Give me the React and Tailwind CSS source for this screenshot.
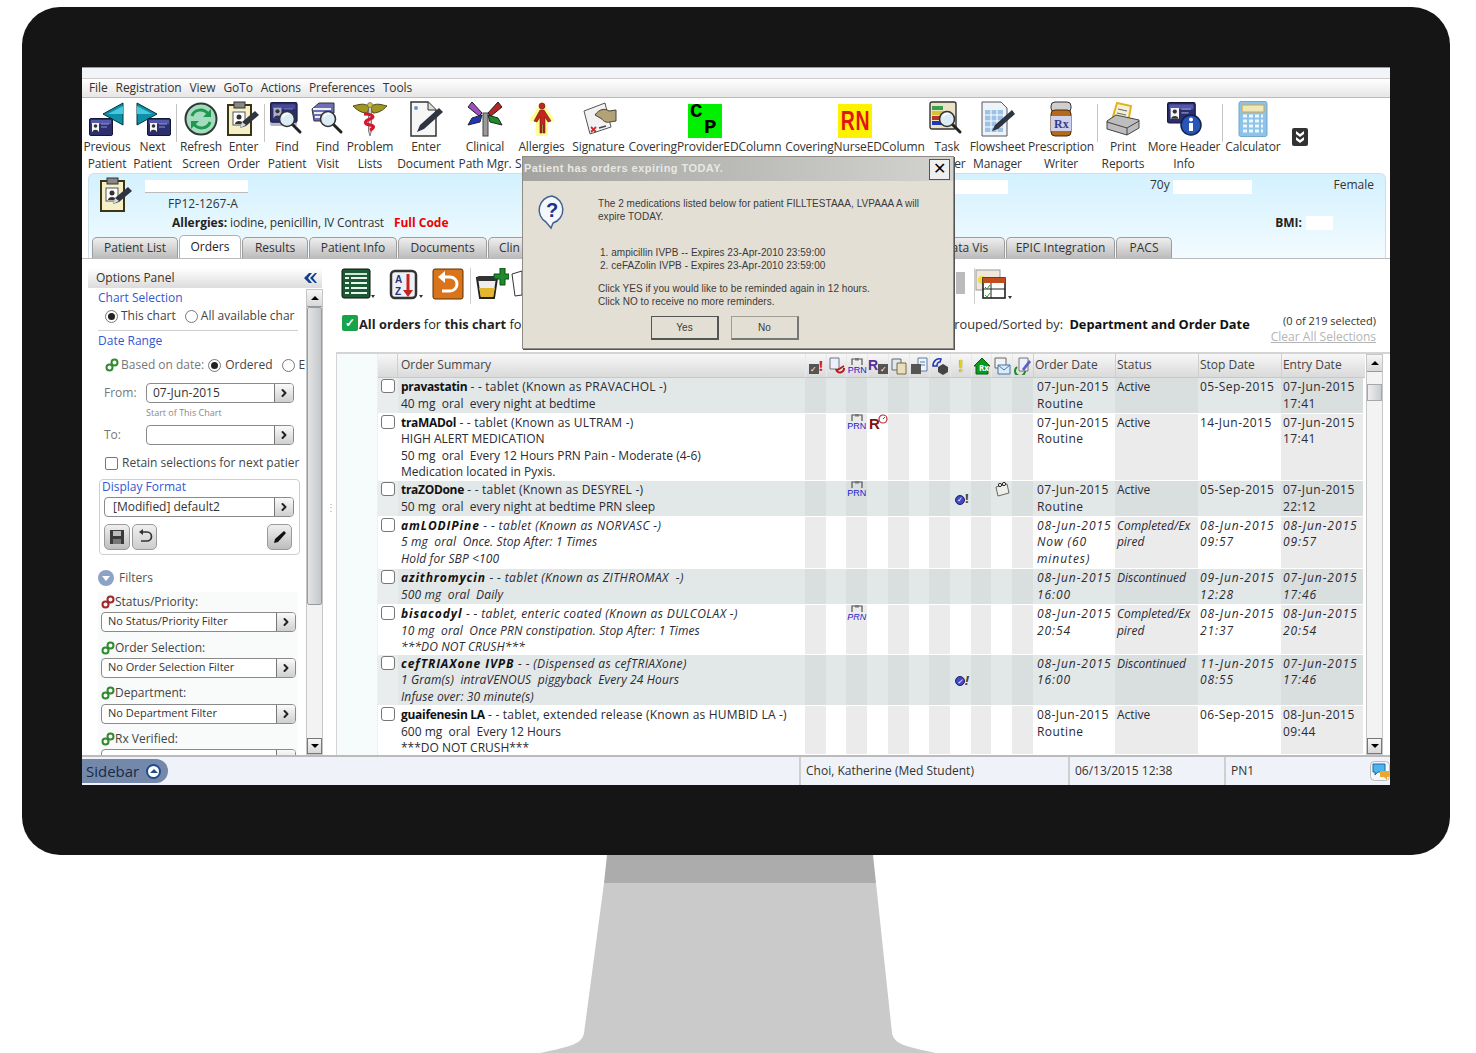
import { ChevronRight } from 'lucide-react';

const cardIcon = (
  <g>
    <rect x="0.5" y="0.5" width="23" height="17" rx="1.5" fill="#2c2f6e" stroke="#15173a" />
    <rect x="2" y="2" width="20" height="4" fill="#5358a8" />
    <rect x="3" y="5" width="7" height="9" fill="#f4f4f4" />
    <circle cx="6.5" cy="8" r="1.8" fill="#333" />
    <path d="M3.5 14c0-3 6-3 6 0z" fill="#333" />
    <path d="M12 6h8M12 9h6" stroke="#8f93d6" strokeWidth="1" />
  </g>
);

const glass = (
  <g>
    <path d="M23 23l8 8" stroke="#222" strokeWidth="3" strokeLinecap="round" />
    <circle cx="18" cy="18" r="7.5" fill="#dcecf7" stroke="#333" strokeWidth="1.6" />
    <path d="M14 16c1-3 4-4 6-3" stroke="#fff" strokeWidth="1.5" fill="none" />
  </g>
);

const pencil = (
  <g>
    <path d="M14 27l2-6 13-11 4 4-13 11z" fill="#2e3440" />
    <path d="M14 27l2-6 4 3z" fill="#d8d8d8" />
  </g>
);

function Ico({ children, box = '0 0 36 36' }) {
  return <svg viewBox={box} className="w-[36px] h-[36px]">{children}</svg>;
}

const icons = {
  prev: (
    <Ico>
      <path d="M34 2v22L14 13z" fill="#0e8fa8" stroke="#06323d" />
      <path d="M34 5v8L19 13z" fill="#48c8df" />
      <g transform="translate(0 17)">{cardIcon}</g>
    </Ico>
  ),
  next: (
    <Ico>
      <path d="M2 2v22l20-11z" fill="#0e8fa8" stroke="#06323d" />
      <path d="M2 5v8l15 0z" fill="#48c8df" />
      <g transform="translate(12 17)">{cardIcon}</g>
    </Ico>
  ),
  refresh: (
    <Ico>
      <circle cx="18" cy="18" r="15.5" fill="#a5dcc0" stroke="#2d3a35" strokeWidth="2" />
      <path d="M9 15c2-7 12-8 16-2" fill="none" stroke="#1f9950" strokeWidth="3" />
      <path d="M28 8v8h-8z" fill="#1f9950" />
      <path d="M27 21c-2 7-12 8-16 2" fill="none" stroke="#1f9950" strokeWidth="3" />
      <path d="M8 28v-8h8z" fill="#1f9950" />
    </Ico>
  ),
  order: (
    <Ico>
      <rect x="2" y="4" width="23" height="30" fill="#f5f0c8" stroke="#3a3614" strokeWidth="2" />
      <rect x="8" y="1" width="11" height="6" fill="#888" stroke="#333" />
      <rect x="7" y="11" width="12" height="13" fill="#fff" stroke="#555" />
      <circle cx="13" cy="16" r="2.5" fill="#333" />
      <path d="M9 23c0-4 8-4 8 0z" fill="#333" />
      {pencil}
    </Ico>
  ),
  findPatient: (
    <Ico>
      <g transform="translate(1 1) scale(1.15)">{cardIcon}</g>
      <rect x="1" y="1" width="27" height="24" rx="2" fill="#2c2f6e" opacity="0.35" />
      {glass}
    </Ico>
  ),
  findVisit: (
    <Ico>
      <path d="M2 8l7-6h15v10L12 20H4z" fill="#6a6fb8" stroke="#333" />
      <path d="M3 8h18M4 12h16M5 16h12" stroke="#eee" strokeWidth="2" />
      {glass}
    </Ico>
  ),
  problem: (
    <Ico>
      <path d="M18 6C12 1 6 4 1 5c4 4 8 7 14 7zM18 6c6-5 12-2 17-1-4 4-8 7-14 7z" fill="#a09622" stroke="#4e4a10" />
      <path d="M16.5 4h3v26l-1.5 5-1.5-5z" fill="#cfcfcf" stroke="#555" strokeWidth="0.7" />
      <path d="M12 13c8 0 12 3 6 5-6 2-6 5 0 6 6 1 3 4 0 5" fill="none" stroke="#d8152a" strokeWidth="3.2" />
      <circle cx="18" cy="4" r="2.5" fill="#d6c23a" stroke="#555" strokeWidth="0.6" />
    </Ico>
  ),
  document: (
    <Ico>
      <path d="M3 1h17l8 8v26H3z" fill="#f6f6f6" stroke="#333" strokeWidth="1.5" />
      <path d="M20 1v8h8" fill="#ddd" stroke="#333" />
      <circle cx="8" cy="7" r="2" fill="#6a8fd8" />
      <path d="M9 31l3-7 19-17 4 4-19 17z" fill="#2e3440" />
    </Ico>
  ),
  clinical: (
    <Ico>
      <rect x="16" y="12" width="5" height="23" fill="#9a9a9a" stroke="#444" />
      <path d="M15 12L5 1 1 6l11 9z" fill="#9b4fc0" stroke="#222" />
      <path d="M21 12L31 1l4 5-11 9z" fill="#b5252a" stroke="#222" />
      <path d="M15 14L5 17 1 24l12-3z" fill="#2136b8" stroke="#222" />
      <path d="M21 14l10 3 4 7-12-3z" fill="#1d8a2c" stroke="#222" />
    </Ico>
  ),
  allergies: (
    <Ico>
      <path d="M18 0l13 20-7 1v14H12V21l-7-1z" fill="#ffff6a" opacity="0.75" />
      <circle cx="18" cy="5" r="3" fill="#c3261d" stroke="#5a1d10" strokeWidth="0.6" />
      <path d="M16 9h4l7 11-3 1-3-5v16h-2v-9h-1v9h-2V16l-3 5-3-1z" fill="#c3261d" stroke="#5a1d10" strokeWidth="0.6" />
    </Ico>
  ),
  signature: (
    <Ico>
      <path d="M3 10L24 2l6 24-21 7z" fill="#f2f2f2" stroke="#555" />
      <path d="M10 26l5 5M15 26l-5 5" stroke="#d12a2a" strokeWidth="1.8" />
      <path d="M18 27l7-2" stroke="#444" strokeWidth="1.5" />
      <path d="M14 14c4-6 10-7 14-4l7-1v11l-6 1c-4 1-7-1-8-3z" fill="#b1a277" stroke="#4a442f" />
    </Ico>
  ),
  task: (
    <Ico>
      <rect x="1" y="1" width="26" height="27" rx="2" fill="#e9e2c4" stroke="#333" strokeWidth="1.4" />
      <rect x="3" y="5" width="11" height="4" fill="#3aa14a" />
      <rect x="3" y="10" width="11" height="4" fill="#d6c23a" />
      <rect x="3" y="15" width="11" height="4" fill="#b5352a" />
      <rect x="3" y="20" width="11" height="4" fill="#2136b8" />
      {glass}
    </Ico>
  ),
  flowsheet: (
    <Ico>
      <path d="M2 1h19l6 6v28H2z" fill="#eef3f8" stroke="#556" />
      <path d="M5 9h18v22H5z" fill="#9cc3e6" />
      <path d="M11 9v22M17 9v22M5 14h18M5 20h18M5 26h18" stroke="#fff" />
      <path d="M12 30l3-6 17-15 3 4-17 15z" fill="#2e3440" />
    </Ico>
  ),
  rx: (
    <Ico>
      <rect x="8" y="1" width="20" height="10" rx="4" fill="#cfcfcf" stroke="#333" />
      <rect x="8" y="9" width="20" height="26" rx="4" fill="#b46a1c" stroke="#4a2a08" />
      <rect x="8" y="15" width="20" height="15" fill="#cfd0ea" />
      <text x="11" y="27" fontSize="12" fontWeight="700" fontFamily="Liberation Serif, serif" fill="#343a8a">Rx</text>
    </Ico>
  ),
  print: (
    <Ico>
      <path d="M12 2l14 3-3 17-16-3z" fill="#f4f0d8" stroke="#e2b41c" strokeWidth="2" />
      <path d="M13 8l9 2M12 12l9 2" stroke="#666" />
      <path d="M2 20l9-6 23 5v8l-12 7L2 28z" fill="#bdbdbd" stroke="#444" />
      <path d="M2 21l20 6 12-7M22 27v7" stroke="#444" fill="none" />
    </Ico>
  ),
  header: (
    <Ico>
      <g transform="translate(1 1) scale(1.2)">{cardIcon}</g>
      <circle cx="25" cy="24" r="10" fill="#2955b8" stroke="#10204a" strokeWidth="1.5" />
      <circle cx="25" cy="18.5" r="2" fill="#fff" />
      <path d="M23 22h4v8h-4z" fill="#fff" />
    </Ico>
  ),
  calculator: (
    <Ico>
      <rect x="4" y="0.5" width="28" height="35" rx="2" fill="#8cc3ea" stroke="#74a7cc" />
      <rect x="7" y="4" width="22" height="7" fill="#eee8b8" stroke="#d7a33a" />
      <path d="M8 15h4M14 15h4M20 15h4M26 15h2M8 20h4M14 20h4M20 20h4M26 20h2M8 25h4M14 25h4M20 25h4M26 25h2M8 30h4M14 30h4M20 30h4M26 30h2" stroke="#eef7fd" strokeWidth="3" />
    </Ico>
  ),
};

const toolbar = [
  { w: 'w-[46px]', icon: icons.prev, lines: ['Previous', 'Patient'] },
  { w: 'w-[45px]', icon: icons.next, lines: ['Next', 'Patient'] },
  { sep: true },
  { w: 'w-[46px]', icon: icons.refresh, lines: ['Refresh', 'Screen'] },
  { w: 'w-[39px]', icon: icons.order, lines: ['Enter', 'Order'] },
  { sep: true },
  { w: 'w-[42px]', icon: icons.findPatient, lines: ['Find', 'Patient'] },
  { w: 'w-[39px]', icon: icons.findVisit, lines: ['Find', 'Visit'] },
  { w: 'w-[46px]', icon: icons.problem, lines: ['Problem', 'Lists'] },
  { w: 'w-[66px]', icon: icons.document, lines: ['Enter', 'Document'] },
  { w: 'w-[52px]', icon: icons.clinical, lines: ['Clinical', 'Path Mgr.'] },
  { w: 'w-[61px]', icon: icons.allergies, lines: ['Allergies', 'Summary'] },
  { w: 'w-[53px]', icon: icons.signature, lines: ['Signature', ''] },
  {
    w: 'w-[160px]',
    lines: ['CoveringProviderEDColumn', ''],
    icon: (
      <div className="w-[34px] h-[34px] mt-[3px] bg-[#00f000] text-black font-['Liberation_Mono',monospace] font-bold text-[21px] leading-[16px] pl-[2px] overflow-hidden">
        <div>C</div>
        <div className="pl-[14px]">P</div>
      </div>
    ),
  },
  {
    w: 'w-[140px]',
    lines: ['CoveringNurseEDColumn', ''],
    icon: (
      <div className="w-[34px] h-[34px] mt-[3px] bg-[#fff200] text-[#e01515] font-['Liberation_Sans',sans-serif] font-bold text-[27px] leading-[34px] flex justify-center overflow-hidden">
        <span className="scale-x-[0.72] tracking-[1px]">RN</span>
      </div>
    ),
  },
  { w: 'w-[44px]', icon: icons.task, lines: ['Task', 'Viewer'] },
  { w: 'w-[57px]', icon: icons.flowsheet, lines: ['Flowsheet', 'Manager'] },
  { w: 'w-[70px]', icon: icons.rx, lines: ['Prescription', 'Writer'] },
  { sep: true },
  { w: 'w-[48px]', icon: icons.print, lines: ['Print', 'Reports'] },
  { w: 'w-[74px]', icon: icons.header, lines: ['More Header', 'Info'] },
  { sep: true },
  { w: 'w-[58px]', icon: icons.calculator, lines: ['Calculator', ''] },
];

function ToolSep() {
  return <div className="w-px h-[38px] mt-[6px] mx-[1px] bg-[#c4c4c4] shrink-0" />;
}

function ToolItem({ item }) {
  return (
    <div className={`${item.w} shrink-0 flex flex-col items-center`}>
      <div className="h-[42px] flex items-center justify-center">{item.icon}</div>
      <div className="-mt-[2px] leading-[17px] whitespace-nowrap text-center tracking-[-0.12px]">
        <div>{item.lines[0]}</div>
        <div>{item.lines[1]}</div>
      </div>
    </div>
  );
}

function Tab({ w, active, children }) {
  return (
    <div
      className={
        active
          ? `${w} h-[23px] -mt-[2px] border border-b-0 border-[#b0b0b0] rounded-t-[5px] bg-white flex items-center justify-center text-[#222]`
          : `${w} h-[21px] border border-b-0 border-[#9c9c9c] rounded-t-[5px] bg-linear-to-b from-[#efefef] to-[#bcbcbc] flex items-center justify-center text-[#333]`
      }
    >
      {children}
    </div>
  );
}

function LinkIcon({ red }) {
  const c = red ? '#a3262a' : '#2e8b2e';
  return (
    <svg viewBox="0 0 14 14" className="w-[14px] h-[14px] shrink-0">
      <circle cx="4.5" cy="9.5" r="3" fill="none" stroke={c} strokeWidth="2" />
      <circle cx="9.5" cy="4.5" r="3" fill="none" stroke={c} strokeWidth="2" />
    </svg>
  );
}

function Radio({ on }) {
  return (
    <span className="w-[13px] h-[13px] rounded-full border border-[#777] bg-white flex items-center justify-center shrink-0">
      {on && <span className="w-[7px] h-[7px] rounded-full bg-[#222]" />}
    </span>
  );
}

function Field({ text, w, small }) {
  return (
    <div className={`${w} h-[20px] flex shrink-0 border border-[#8a8a8a] rounded-[4px] bg-white overflow-hidden`}>
      <div className={small ? 'flex-1 pl-[6px] text-[11px] leading-[16px] text-[#333] whitespace-nowrap' : 'flex-1 pl-[6px] leading-[17px] text-[#333] whitespace-nowrap'}>
        {text}
      </div>
      <div className="w-[19px] border-l border-[#777] bg-linear-to-b from-[#fafafa] to-[#cfcfcf] flex items-center justify-center">
        <ChevronRight size={12} strokeWidth={4} className="text-[#222]" />
      </div>
    </div>
  );
}

function Scrollbar({ thumb, track, tail }) {
  return (
    <div className="w-[17px] shrink-0 flex flex-col bg-[#f3f3f3] border border-[#c6c6c6]">
      <div className="h-[17px] border-b border-[#9a9a9a] bg-linear-to-b from-[#f6f6f6] to-[#d8d8d8] flex items-center justify-center">
        <div className="w-0 h-0 border-x-[4px] border-x-transparent border-b-[4px] border-b-black" />
      </div>
      <div className={track} />
      <div className={thumb} />
      <div className={tail} />
      <div className="h-[16px] border border-[#777] bg-linear-to-b from-[#f6f6f6] to-[#d8d8d8] flex items-center justify-center">
        <div className="w-0 h-0 border-x-[4px] border-x-transparent border-t-[4px] border-t-black" />
      </div>
    </div>
  );
}

function OptionsPanel() {
  return (
    <aside className="w-[243px] shrink-0 pl-[6px] pt-[9px] flex flex-col">
      <div className="h-[20px] flex items-center justify-between pl-[8px] pr-[5px] mr-[3px] bg-linear-to-b from-white to-[#dcdcdc] text-[#333]">
        <span>Options Panel</span>
        <svg viewBox="0 0 14 12" className="w-[14px] h-[12px]">
          <path d="M6 1L1 6l5 5h3L5 6l4-5zM12 1L7 6l5 5h2l-4-5 4-5z" fill="#123e8f" />
        </svg>
      </div>
      <div className="flex h-[467px] pt-[1px]">
        <div className="w-[218px] pl-[10px] overflow-hidden text-[#444]">
          <div className="h-[17px] leading-[17px] text-[#3258cf]">Chart Selection</div>
          <div className="h-[20px] flex items-center pl-[7px] whitespace-nowrap">
            <Radio on />
            <span className="ml-[3px]">This chart</span>
            <span className="ml-[9px]"><Radio /></span>
            <span className="ml-[3px]">All available char</span>
          </div>
          <div className="mt-[4px] h-px w-[200px] bg-[#cfcfcf]" />
          <div className="h-[20px] leading-[20px] text-[#3258cf]">Date Range</div>
          <div className="mt-[4px] h-[20px] flex items-center pl-[7px] whitespace-nowrap">
            <LinkIcon />
            <span className="ml-[2px] text-[#777]">Based on date:</span>
            <span className="ml-[4px]"><Radio on /></span>
            <span className="ml-[4px]">Ordered</span>
            <span className="ml-[9px]"><Radio /></span>
            <span className="ml-[4px]">E</span>
          </div>
          <div className="mt-[8px] flex items-center h-[20px]">
            <span className="w-[48px] pl-[6px] text-[#777]">From:</span>
            <Field text="07-Jun-2015" w="w-[148px]" />
          </div>
          <div className="h-[20px] pl-[48px] leading-[20px] text-[9px] text-[#888]">Start of This Chart</div>
          <div className="mt-[2px] flex items-center h-[20px]">
            <span className="w-[48px] pl-[6px] text-[#777]">To:</span>
            <Field text="" w="w-[148px]" />
          </div>
          <div className="mt-[8px] h-[20px] flex items-center pl-[7px] whitespace-nowrap">
            <span className="w-[13px] h-[13px] border border-[#777] rounded-[2px] bg-white shrink-0" />
            <span className="ml-[4px]">Retain selections for next patier</span>
          </div>
          <div className="mt-[6px] h-[76px] w-[201px] ml-px border border-[#cfcfcf] rounded-[4px] pl-[4px]">
            <div className="h-[14px] mb-[3px] -ml-[2px] leading-[14px] text-[#3258cf]">Display Format</div>
            <Field text={<span className="pl-[2px]">[Modified] default2</span>} w="w-[190px]" />
            <div className="mt-[7px] flex gap-[2px] pr-[7px]">
              <button className="w-[26px] h-[26px] rounded-[5px] border border-[#9a9a9a] bg-linear-to-b from-[#f0f0f0] to-[#bdbdbd] flex items-center justify-center">
                <svg viewBox="0 0 16 16" className="w-[16px] h-[16px]">
                  <path d="M1 1h14v14H1z" fill="#3a3a3a" />
                  <path d="M4 2h8v5H4z" fill="#bbb" />
                  <path d="M4 10h8v5H4z" fill="#777" />
                </svg>
              </button>
              <button className="w-[25px] h-[26px] rounded-[5px] border border-[#9a9a9a] bg-linear-to-b from-[#f0f0f0] to-[#cdcdcd] flex items-center justify-center">
                <svg viewBox="0 0 16 16" className="w-[16px] h-[16px]">
                  <path d="M5 3h5a4 4 0 010 9H4" fill="none" stroke="#333" strokeWidth="1.7" />
                  <path d="M6 0L2 3l4 3z" fill="#333" />
                </svg>
              </button>
              <button className="ml-auto w-[25px] h-[26px] rounded-[5px] border border-[#9a9a9a] bg-linear-to-b from-[#f0f0f0] to-[#bdbdbd] flex items-center justify-center">
                <svg viewBox="0 0 16 16" className="w-[16px] h-[16px]">
                  <path d="M2 14l1-4L12 2l2 2-8 9z" fill="#111" />
                </svg>
              </button>
            </div>
          </div>
          <div className="mt-[13px] h-[20px] flex items-center">
            <span className="w-[16px] h-[16px] rounded-full bg-[#8ea2c6] flex items-center justify-center shrink-0">
              <span className="w-0 h-0 border-x-[4px] border-x-transparent border-t-[5px] border-t-white" />
            </span>
            <span className="ml-[5px] text-[#555]">Filters</span>
          </div>
          <div className="bg-[#f8fbfa] pl-[3px] w-[200px]">
            <div className="mt-[4px] h-[18px] flex items-center whitespace-nowrap pt-[1px]">
              <LinkIcon red />
              <span>Status/Priority:</span>
            </div>
            <div className="mt-[2px]"><Field small text="No Status/Priority Filter" w="w-[195px]" /></div>
            <div className="mt-[7px] h-[18px] flex items-center"><LinkIcon /><span>Order Selection:</span></div>
            <div className="mt-px"><Field small text="No Order Selection Filter" w="w-[195px]" /></div>
            <div className="mt-[6px] h-[18px] flex items-center"><LinkIcon /><span>Department:</span></div>
            <div className="mt-[2px]"><Field small text="No Department Filter" w="w-[195px]" /></div>
            <div className="mt-[6px] h-[18px] flex items-center"><LinkIcon /><span>Rx Verified:</span></div>
            <div className="mt-px"><Field text="" w="w-[195px]" /></div>
          </div>
        </div>
        <Scrollbar
          track="h-0"
          thumb="h-[298px] bg-linear-to-r from-[#e3e3e3] to-[#c4c8cc] border border-[#9a9a9a] rounded-[2px]"
          tail="flex-1"
        />
      </div>
    </aside>
  );
}

function PrnIcon() {
  return (
    <div className="w-[20px] flex flex-col items-center">
      <svg viewBox="0 0 12 8" className="w-[12px] h-[8px]">
        <path d="M1 7V1h10v6" fill="none" stroke="#555" strokeWidth="1.2" />
        <rect x="4" y="0" width="4" height="2.5" fill="#777" />
      </svg>
      <span className="text-[#1a1acb] text-[9px] leading-[8px] font-['Liberation_Sans',sans-serif]">PRN</span>
    </div>
  );
}

function AlertIcon() {
  return (
    <div className="flex items-center justify-center pl-[3px] -mt-px">
      <span className="w-[10px] h-[10px] mt-[3px] rounded-full bg-[#4446c4] border border-[#22226e] flex items-center justify-center text-white text-[7px] leading-[7px]">✓</span>
      <span className="text-[#444] font-bold text-[13px] leading-[14px]">!</span>
    </div>
  );
}

function RClockIcon() {
  return (
    <svg viewBox="0 0 20 16" className="w-[20px] h-[16px]">
      <text x="1" y="15" fontSize="15" fontWeight="700" fontFamily="Liberation Sans, sans-serif" fill="#7d1216">R</text>
      <circle cx="15" cy="5" r="4" fill="#fff" stroke="#c52a2a" strokeWidth="1.2" />
      <path d="M15 5l2-2" stroke="#c52a2a" />
    </svg>
  );
}

function MailIcon() {
  return (
    <svg viewBox="0 0 16 16" className="w-[16px] h-[16px]">
      <path d="M2 6l11-3 2 9-11 3z" fill="#f0efe7" stroke="#666" />
      <circle cx="6" cy="4" r="1.6" fill="#fff" stroke="#222" />
      <circle cx="10" cy="3" r="1.6" fill="#fff" stroke="#222" />
    </svg>
  );
}

const headerIcons = [
  <div className="flex items-start" key="0"><span className="w-[10px] h-[10px] mt-[6px] bg-[#555] text-white text-[8px] leading-[10px] text-center">✓</span><span className="text-[#e01b24] font-bold text-[15px] leading-[15px]">!</span></div>,
  <svg key="1" viewBox="0 0 18 18" className="w-[18px] h-[18px]"><path d="M2 1h9v11H2z" fill="#eef" stroke="#777" /><path d="M8 12a4 4 0 108-1M16 9l-8 5" fill="none" stroke="#b71c1c" strokeWidth="2" /></svg>,
  <PrnIcon key="2" />,
  <div className="flex items-start" key="3"><span className="text-[#5a2d9c] font-bold text-[14px] leading-[14px] font-['Liberation_Sans',sans-serif]">R</span><span className="w-[10px] h-[10px] mt-[6px] bg-[#555] text-white text-[8px] leading-[10px] text-center">✓</span></div>,
  <svg key="4" viewBox="0 0 18 18" className="w-[18px] h-[18px]"><path d="M2 2h9v11H2z" fill="#dfe9f2" stroke="#666" /><path d="M7 6h9v11H7z" fill="#e8dfc0" stroke="#7a6a3a" /></svg>,
  <svg key="5" viewBox="0 0 18 18" className="w-[18px] h-[18px]"><path d="M8 1h9v13H8z" fill="#eef4fb" stroke="#5a7ca8" /><path d="M10 5h5M10 8h5" stroke="#5a7ca8" /><rect x="1" y="7" width="10" height="10" fill="#555" /></svg>,
  <svg key="6" viewBox="0 0 18 18" className="w-[18px] h-[18px]"><path d="M2 9c0-6 5-8 8-7l-1 3c-2 0-3 2-3 4z" fill="none" stroke="#2136b8" strokeWidth="1.6" /><path d="M7 10l5-3 5 3v5l-5 3-5-3z" fill="#444" /></svg>,
  <span key="7" className="text-[#e3d21c] font-bold text-[16px] leading-[16px] [text-shadow:0_0_1px_#7a7a10]">!</span>,
  <svg key="8" viewBox="0 0 18 18" className="w-[18px] h-[18px]"><path d="M9 1l8 8h-2v8H3V9H1z" fill="#0b9b1c" stroke="#0a5d14" /><text x="6" y="14" fontSize="8" fontWeight="700" fill="#fff">Rx</text></svg>,
  <svg key="9" viewBox="0 0 18 18" className="w-[18px] h-[18px]"><path d="M2 1h11v10H2z" fill="#f3f3f3" stroke="#666" /><path d="M5 8h12v9H5z" fill="#dcebf7" stroke="#3d78ad" /><path d="M5 8l6 5 6-5" fill="none" stroke="#3d78ad" /></svg>,
  <svg key="10" viewBox="0 0 18 18" className="w-[18px] h-[18px]"><path d="M5 1h9v13H5z" fill="#eef" stroke="#777" /><path d="M8 12L15 3l2 2-7 9z" fill="#5a62c0" /><path d="M3 10a5 5 0 108 4" fill="none" stroke="#1e8a2e" strokeWidth="2" /></svg>,
];

const rows = [
  {
    h: 'h-[35px]', shade: true, name: 'pravastatin', rest: ' - - tablet (Known as PRAVACHOL -)',
    lines: ['40 mg  oral  every night at bedtime'],
    cols: [['07-Jun-2015', 'Routine'], ['Active'], ['05-Sep-2015'], ['07-Jun-2015', '17:41']],
  },
  {
    h: 'h-[67px]', name: 'traMADol', rest: ' - - tablet (Known as ULTRAM -)',
    lines: ['HIGH ALERT MEDICATION', '50 mg  oral  Every 12 Hours PRN Pain - Moderate (4-6)', 'Medication located in Pyxis.'],
    cols: [['07-Jun-2015', 'Routine'], ['Active'], ['14-Jun-2015'], ['07-Jun-2015', '17:41']],
    icons: { 2: <PrnIcon />, 3: <RClockIcon /> },
  },
  {
    h: 'h-[35px]', shade: true, name: 'traZODone', rest: ' - - tablet (Known as DESYREL -)',
    lines: ['50 mg  oral  every night at bedtime PRN sleep'],
    cols: [['07-Jun-2015', 'Routine'], ['Active'], ['05-Sep-2015'], ['07-Jun-2015', '22:12']],
    icons: { 2: <PrnIcon />, 7: <AlertIcon />, 9: <MailIcon /> },
  },
  {
    h: 'h-[52px]', italic: true, name: 'amLODIPine', rest: ' - - tablet (Known as NORVASC -)',
    lines: ['5 mg  oral  Once. Stop After: 1 Times', 'Hold for SBP <100'],
    cols: [['08-Jun-2015', 'Now (60', 'minutes)'], ['Completed/Ex', 'pired'], ['08-Jun-2015', '09:57'], ['08-Jun-2015', '09:57']],
  },
  {
    h: 'h-[35px]', shade: true, italic: true, name: 'azithromycin', rest: ' - - tablet (Known as ZITHROMAX  -)',
    lines: ['500 mg  oral  Daily'],
    cols: [['08-Jun-2015', '16:00'], ['Discontinued'], ['09-Jun-2015', '12:28'], ['07-Jun-2015', '17:46']],
  },
  {
    h: 'h-[49px]', italic: true, name: 'bisacodyl', rest: ' - - tablet, enteric coated (Known as DULCOLAX -)',
    lines: ['10 mg  oral  Once PRN constipation. Stop After: 1 Times', '***DO NOT CRUSH***'],
    cols: [['08-Jun-2015', '20:54'], ['Completed/Ex', 'pired'], ['08-Jun-2015', '21:37'], ['08-Jun-2015', '20:54']],
    icons: { 2: <PrnIcon /> },
  },
  {
    h: 'h-[51px]', shade: true, italic: true, name: 'cefTRIAXone IVPB', rest: ' - - (Dispensed as cefTRIAXone)',
    lines: ['1 Gram(s)  intraVENOUS  piggyback  Every 24 Hours', 'Infuse over: 30 minute(s)'],
    cols: [['08-Jun-2015', '16:00'], ['Discontinued'], ['11-Jun-2015', '08:55'], ['07-Jun-2015', '17:46']],
    icons: { 7: <AlertIcon /> },
  },
  {
    h: 'h-[48px]', name: 'guaifenesin LA', rest: ' - - tablet, extended release (Known as HUMBID LA -)',
    lines: ['600 mg  oral  Every 12 Hours', '***DO NOT CRUSH***'],
    cols: [['08-Jun-2015', 'Routine'], ['Active'], ['06-Sep-2015'], ['08-Jun-2015', '09:44']],
  },
];

const rowGrid = 'grid grid-cols-[20px_407px_repeat(11,20.73px)_82px_83px_83px_82px]';
const iconSlots = [0, 1, 2, 3, 4, 5, 6, 7, 8, 9, 10];

function OrderRow({ row }) {
  const tint = row.shade ? 'bg-[#d9dede]' : 'bg-[#ebebeb]';
  const base = row.shade ? 'bg-[#e2e7e7]' : 'bg-white';
  const dateTrack = row.italic ? 'tracking-[0.95px]' : 'tracking-[0.45px]';
  return (
    <div className={`${rowGrid} ${row.h} ${row.italic ? 'italic' : ''} mb-px overflow-hidden text-[#2a2a33]`}>
      <div className={row.shade ? 'bg-[#e9eded]' : 'bg-white'}>
        <span className="block w-[14px] h-[14px] mt-px ml-[3px] border border-[#777] rounded-[3px] bg-white" />
      </div>
      <div className={`${base} pt-px pl-[3px] leading-[16.5px] whitespace-pre ${row.italic ? 'tracking-[0.12px]' : ''}`}>
        <div>
          <b className={row.italic ? 'text-[#111] tracking-[0.9px]' : 'text-[#111] tracking-[-0.3px]'}>{row.name}</b>
          <span className={row.italic ? 'tracking-[0.4px]' : 'tracking-[0.2px]'}>{row.rest}</span>
        </div>
        {row.lines.map((line) => <div key={line}>{line}</div>)}
      </div>
      {iconSlots.map((i) => (
        <div key={i} className={`${i % 2 === 0 ? tint : base} flex justify-center`}>
          {row.icons?.[i]}
        </div>
      ))}
      {row.cols.map((col, i) => (
        <div key={i} className={`${i % 2 === 1 ? tint : base} ${i === 1 ? '' : dateTrack} ${i === 0 ? 'pl-[4px]' : 'pl-[2px]'} pt-px leading-[16.5px] whitespace-nowrap`}>
          {col.map((line) => <div key={line}>{line}</div>)}
        </div>
      ))}
    </div>
  );
}

function OrdersTable() {
  const heads = ['Order Date', 'Status', 'Stop Date', 'Entry Date'];
  return (
    <div className="flex h-[403px] border-t-2 border-l border-[#d4d4d4] overflow-hidden">
      <div className="w-[41px] shrink-0 bg-[#f6fbfb] border-r border-dotted border-[#e4e4e4]" />
      <div className="w-[987px] shrink-0 flex flex-col overflow-hidden">
        <div className={`${rowGrid} h-[24px] shrink-0 bg-linear-to-b from-[#f7f7f7] to-[#dadada] border-b border-[#c8c8c8] font-medium text-[#444]`}>
          <div className="border-r border-[#cfcfcf]" />
          <div className="pl-[3px] leading-[22px]">Order Summary</div>
          {headerIcons.map((icon, i) => (
            <div key={i} className="border-l border-[#e8e8e8] flex items-center justify-center overflow-hidden">{icon}</div>
          ))}
          {heads.map((h) => (
            <div key={h} className="border-l border-[#cfcfcf] pl-[1px] leading-[22px] whitespace-nowrap">{h}</div>
          ))}
        </div>
        {rows.map((row) => <OrderRow key={row.name} row={row} />)}
      </div>
      <div className="ml-[1px] mr-[8px] flex">
        <Scrollbar
          track="h-[12px]"
          thumb="h-[17px] bg-linear-to-r from-[#eeeeee] to-[#c9cdd1] border border-[#a8a8a8]"
          tail="flex-1"
        />
      </div>
    </div>
  );
}

function OrdersToolbar() {
  return (
    <div className="h-[52px] flex pt-[9px] pl-[3px]">
      <svg viewBox="0 0 34 32" className="w-[34px] h-[32px] ml-[2px]">
        <rect x="1" y="1" width="28" height="29" rx="2" fill="#1c5a36" stroke="#111" />
        <path d="M4 5h22v2H4z" fill="#cfe6d6" />
        <path d="M4 10h4M10 10h16M4 15h4M10 15h16M4 20h4M10 20h16M4 25h4M10 25h16" stroke="#e8f5ec" strokeWidth="2" />
        <path d="M30 27h4l-2 3z" fill="#333" />
      </svg>
      <svg viewBox="0 0 36 32" className="w-[36px] h-[32px] ml-[13px]">
        <rect x="3" y="3" width="25" height="27" rx="4" fill="#eef0f6" stroke="#333" strokeWidth="2.5" />
        <text x="7" y="15" fontSize="10" fontWeight="700" fill="#25337a" fontFamily="Liberation Sans, sans-serif">A</text>
        <text x="7" y="27" fontSize="10" fontWeight="700" fill="#25337a" fontFamily="Liberation Sans, sans-serif">Z</text>
        <path d="M20 6v18" stroke="#c3241d" strokeWidth="3" />
        <path d="M15 22h10l-5 7z" fill="#c3241d" />
        <path d="M31 27h4l-2 3z" fill="#333" />
      </svg>
      <svg viewBox="0 0 32 32" className="w-[32px] h-[32px] ml-[8px]">
        <rect x="1" y="1" width="30" height="30" rx="2" fill="#d9741a" stroke="#5a3008" />
        <path d="M10 9h8a7 7 0 010 14h-8" fill="none" stroke="#fff" strokeWidth="3" />
        <path d="M13 3L6 9l7 6z" fill="#fff" />
      </svg>
      <div className="w-px h-[36px] bg-[#ccc] ml-[6px]" />
      <svg viewBox="0 0 34 32" className="w-[34px] h-[32px] ml-[4px]">
        <path d="M2 10h20l-3 20H5z" fill="#eee" stroke="#222" strokeWidth="2" />
        <path d="M4 20h16l-2 9H6z" fill="#e4b62e" />
        <rect x="2" y="8" width="20" height="5" rx="2" fill="#333" />
        <path d="M19 6h6V0h5v6h4v5h-4v6h-5v-6h-6z" fill="#1d8a2c" stroke="#0d4d16" />
      </svg>
      <svg viewBox="0 0 12 30" className="w-[12px] h-[30px] ml-[2px]">
        <path d="M1 6l10-3v24l-7 1z" fill="#fff" stroke="#333" />
      </svg>
      <svg viewBox="0 0 10 30" className="w-[10px] h-[30px] ml-[433px]">
        <path d="M0 4h9v22H0z" fill="#bbb" />
      </svg>
      <div className="w-px h-[36px] bg-[#ccc] ml-[8px]" />
      <svg viewBox="0 0 40 32" className="w-[40px] h-[32px]">
        <rect x="1" y="2" width="24" height="20" fill="#efe6dc" stroke="#999" />
        <circle cx="7" cy="12" r="4" fill="#f2dd3a" />
        <rect x="8" y="10" width="22" height="20" fill="#fff" stroke="#222" strokeWidth="1.6" />
        <path d="M8 10h22v5H8z" fill="#c24c1d" />
        <path d="M8 21h22M16 15v15" stroke="#222" />
        <path d="M10 19l2 2 3-4M10 27l2 2 3-4" stroke="#1f9e32" fill="none" />
        <path d="M33 28h4l-2 3z" fill="#333" />
      </svg>
    </div>
  );
}

function ExpiryDialog() {
  return (
    <div className="absolute left-[440px] top-[89px] w-[432px] h-[193px] bg-[#e3dfd5] border border-[#8e8c84] shadow-[1px_1px_0_#555] font-['Liberation_Sans',sans-serif] text-[#3a3a3a]">
      <div className="h-[24px] flex items-center justify-between pl-[1px] pr-[3px] bg-linear-to-r from-[#a3a39f] to-[#d3d3cf]">
        <span className="pb-[2px] text-[#e8e8e4] font-bold text-[11px] tracking-[0.45px]">Patient has orders expiring TODAY.</span>
        <span className="w-[21px] h-[21px] bg-[#efefef] border border-[#555] flex items-center justify-center text-[16px] text-black">✕</span>
      </div>
      <div className="flex">
        <div className="w-[75px] pt-[13px] pl-[13px]">
          <svg viewBox="0 0 32 36" className="w-[32px] h-[36px]">
            <path d="M16 2a14 14 0 00-6 26l5 6 2-5A14 14 0 0016 2z" fill="#f4f8fd" stroke="#43628f" strokeWidth="1.5" />
            <text x="10" y="23" fontSize="20" fontWeight="700" fill="#1c2f8a" fontFamily="Liberation Sans, sans-serif">?</text>
          </svg>
        </div>
        <div className="pt-[17px] text-[10px] leading-[12.6px] tracking-[0.04px]">
          <div>The 2 medications listed below for patient FILLTESTAAA, LVPAAA A will</div>
          <div>expire TODAY.</div>
          <div className="mt-[24px] pl-[2px]">1. ampicillin IVPB -- Expires 23-Apr-2010 23:59:00</div>
          <div className="pl-[2px]">2. ceFAZolin IVPB - Expires 23-Apr-2010 23:59:00</div>
          <div className="mt-[11px]">Click YES if you would like to be reminded again in 12 hours.</div>
          <div>Click NO to receive no more reminders.</div>
        </div>
      </div>
      <div className="absolute left-[128px] top-[159px] flex gap-[12px] text-[10px]">
        <button className="w-[68px] h-[24px] bg-[#e3dfd5] border border-[#555] border-b-2 border-r-2">Yes</button>
        <button className="w-[68px] h-[24px] bg-[#e3dfd5] border border-[#a09d94] border-b-2 border-r-2 border-b-[#777] border-r-[#777]">No</button>
      </div>
    </div>
  );
}

export default function App() {
  return (
    <div className="w-[1476px] h-[1053px] bg-white overflow-hidden font-['Open_Sans',sans-serif] text-[12px]">
      <div className="ml-[22px] mt-[7px] w-[1428px] h-[848px] rounded-[38px] bg-[#151515] pl-[60px] pt-[60px]">
        <div className="relative w-[1308px] h-[718px] bg-white flex flex-col text-[#333]">
          <div className="h-[11px] bg-[#f1f4f8] border-t border-[#999] shrink-0" />
          <div className="h-[20px] shrink-0 flex items-center gap-[8px] pl-[7px] tracking-[-0.1px] bg-linear-to-b from-white to-[#e6e6e6] border-b border-[#bbb] border-t border-t-[#ccc]">
            {['File', 'Registration', 'View', 'GoTo', 'Actions', 'Preferences', 'Tools'].map((m) => (
              <span key={m}>{m}</span>
            ))}
          </div>
          <div className="h-[75px] shrink-0 flex pl-[2px] text-[#333]">
            {toolbar.map((item, i) => (item.sep ? <ToolSep key={i} /> : <ToolItem key={i} item={item} />))}
            <svg viewBox="0 0 16 18" className="w-[16px] h-[18px] mt-[30px] ml-[10px]">
              <rect width="16" height="18" rx="2" fill="#333" />
              <path d="M4 3l4 3 4-3v3L8 9 4 6zM4 9l4 3 4-3v3l-4 3-4-3z" fill="#fff" />
            </svg>
          </div>

          <div className="ml-[6px] mr-[4px] h-[85px] shrink-0 border border-b-0 border-[#cfdfe8] rounded-t-[6px] bg-linear-to-b from-[#d3f1fe] to-[#f2fbff] flex flex-col">
            <div className="flex h-[63px]">
              <div className="w-[56px] pt-[3px] pl-[10px] shrink-0">
                <svg viewBox="0 0 36 36" className="w-[36px] h-[36px]">
                  {icons.order.props.children}
                </svg>
              </div>
              <div className="flex-1 flex flex-col pr-[11px] text-[#333]">
                <div className="h-[20px] pt-[6px] flex items-start">
                  <div className="w-[103px] h-[13px] bg-white border-b border-[#bbb]" />
                  <div className="ml-[707px] w-[53px] h-[14px] bg-white" />
                  <span className="ml-[142px] -mt-[2px] leading-[14px]">70y</span>
                  <div className="ml-[3px] w-[79px] h-[14px] bg-white" />
                  <span className="ml-auto -mt-[2px] leading-[14px]">Female</span>
                </div>
                <div className="h-[19px] pl-[23px] leading-[20px]">FP12-1267-A</div>
                <div className="h-[19px] pl-[27px] flex items-center">
                  <b className="text-[#222]">Allergies:</b>
                  <span className="ml-[3px] tracking-[-0.15px]">iodine, penicillin, IV Contrast</span>
                  <b className="ml-[10px] text-[#f00000]">Full Code</b>
                  <b className="ml-auto mr-[4px] text-[#222]">BMI:</b>
                  <div className="w-[27px] h-[14px] bg-white mr-[41px]" />
                </div>
              </div>
            </div>
            <div className="h-[21px] flex pl-[3px] gap-px text-[#333]">
              <Tab w="w-[86px]">Patient List</Tab>
              <Tab w="w-[62px]" active>Orders</Tab>
              <Tab w="w-[66px]">Results</Tab>
              <Tab w="w-[88px]">Patient Info</Tab>
              <Tab w="w-[89px]">Documents</Tab>
              <Tab w="w-[212px]"><span className="w-[190px]">Clin</span></Tab>
              <Tab w="w-[224px]" />
              <Tab w="w-[79px]">Data Vis</Tab>
              <Tab w="w-[109px]">EPIC Integration</Tab>
              <Tab w="w-[56px]">PACS</Tab>
            </div>
          </div>

          <div className="h-[497px] shrink-0 flex border-t border-[#bbb]">
            <OptionsPanel />
            <div className="w-[11px] shrink-0 flex items-center justify-center text-[#aaa] text-[10px] leading-[4px]">⋮</div>
            <div className="flex-1 flex flex-col min-w-0">
              <OrdersToolbar />
              <div className="h-[41px] flex pl-[6px] pr-[14px]">
                <div className="w-[603px] flex shrink-0">
                  <span className="w-[16px] h-[16px] mt-[4px] rounded-[2px] bg-[#16a34a] text-white text-[12px] leading-[16px] text-center font-bold">✓</span>
                  <span className="ml-px mt-[3px] text-[12.8px] leading-[20px] whitespace-nowrap text-[#222]">
                    <b>All orders</b> for <b>this chart</b> for
                  </span>
                </div>
                <span className="mt-[3px] text-[12.8px] leading-[20px] whitespace-nowrap text-[#333]">
                  Grouped/Sorted by: <b className="ml-[3px] text-[#111]">Department and Order Date</b>
                </span>
                <div className="ml-auto pt-[2px] text-right text-[11px] leading-[16px] whitespace-nowrap">
                  <div>(0 of 219 selected)</div>
                  <div className="text-[#b4b4b4] underline text-[12px]">Clear All Selections</div>
                </div>
              </div>
              <OrdersTable />
            </div>
          </div>

          <div className="flex-1 flex items-center bg-[#eff2f8] border-t-2 border-[#bbb]">
            <div className="w-[86px] h-[24px] rounded-r-full bg-[#7488ac] flex items-center pl-[4px] text-[#1b2a44] text-[15px]">
              Sidebar
              <span className="ml-[7px] w-[15px] h-[15px] rounded-full bg-white border-2 border-[#234a8a] flex items-center justify-center">
                <span className="w-0 h-0 border-x-[4px] border-x-transparent border-b-[4px] border-b-[#234a8a]" />
              </span>
            </div>
            <div className="ml-[631px] w-[269px] h-full border-l-2 border-[#cfcfcf] pl-[5px] leading-[27px]">Choi, Katherine (Med Student)</div>
            <div className="w-[156px] h-full border-l-2 border-[#cfcfcf] pl-[5px] leading-[27px]">06/13/2015 12:38</div>
            <div className="flex-1 h-full border-l-2 border-[#cfcfcf] pl-[5px] leading-[27px]">PN1</div>
            <svg viewBox="0 0 20 20" className="w-[20px] h-[20px]">
              <rect x="0.5" y="0.5" width="19" height="19" rx="4" fill="#f3f6fa" stroke="#bbb" />
              <path d="M3 3h12v8H8l-3 3v-3H3z" fill="#4fb3ec" stroke="#1b6aa8" />
              <path d="M10 10h9v6h-2v3l-3-3h-4z" fill="#e9a72c" />
            </svg>
          </div>

          <ExpiryDialog />
        </div>
      </div>
      <svg viewBox="0 0 1476 198" className="block w-[1476px] h-[198px]">
        <path d="M607 0h266l3 28 H604z" fill="#acacac" />
        <path d="M604 28h272l16 150c2 10 10 13 44 20H540c34-7 42-10 44-20z" fill="#cacaca" />
      </svg>
    </div>
  );
}
